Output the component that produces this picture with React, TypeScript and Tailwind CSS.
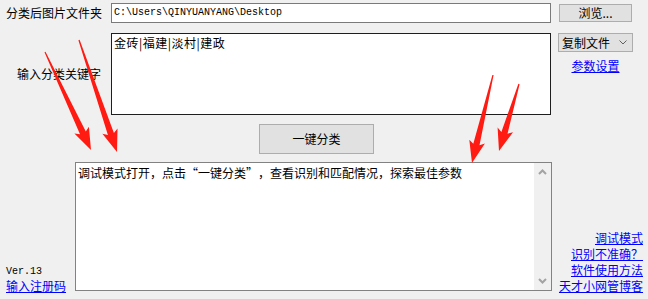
const cjk = "font-['Noto_Sans_CJK_SC',sans-serif]";
const mono = "font-['Liberation_Mono','Noto_Sans_CJK_SC',monospace]";

const arrows = [
  { x1: 45, y1: 52, x2: 91, y2: 150 },
  { x1: 79, y1: 40, x2: 117, y2: 152 },
  { x1: 493, y1: 75, x2: 472, y2: 163 },
  { x1: 519, y1: 84, x2: 499, y2: 151 },
];

function arrowPoints(a: { x1: number; y1: number; x2: number; y2: number }) {
  const dx = a.x2 - a.x1;
  const dy = a.y2 - a.y1;
  const len = Math.hypot(dx, dy);
  const ux = dx / len;
  const uy = dy / len;
  const nx = -uy;
  const ny = ux;
  const head = 19;
  const bx = a.x2 - ux * head;
  const by = a.y2 - uy * head;
  const p = (x: number, y: number) => `${x.toFixed(1)},${y.toFixed(1)}`;
  return [
    p(a.x1 + nx * 0.6, a.y1 + ny * 0.6),
    p(bx + nx * 3.2, by + ny * 3.2),
    p(bx + nx * 8 - ux * 3, by + ny * 8 - uy * 3),
    p(a.x2, a.y2),
    p(bx - nx * 8 - ux * 3, by - ny * 8 - uy * 3),
    p(bx - nx * 3.2, by - ny * 3.2),
    p(a.x1 - nx * 0.6, a.y1 - ny * 0.6),
  ].join(" ");
}

const links = ["调试模式", "识别不准确？", "软件使用方法", "天才小网管博客"];

export default function App() {
  return (
    <div className={`relative w-[648px] h-[299px] bg-[#f0f0f0] text-[12px] text-black overflow-hidden [text-spacing-trim:space-all] ${cjk}`}>
      {/* row 1 */}
      <div className="flex items-start pt-[3px]">
        <div className="w-[111px] pl-[6px] h-[20px] leading-[20px]">分类后图片文件夹</div>
        <div className={`w-[440px] h-[20px] border border-[#7a7a7a] bg-white pl-[2px] text-[10px] leading-[18px] ${mono}`}>
          C:\Users\QINYUANYANG\Desktop
        </div>
        <button className="ml-[8px] mt-[1px] w-[73px] h-[18px] border border-[#adadad] bg-[#e1e1e1] leading-[16px]">
          浏览...
        </button>
      </div>

      {/* row 2 */}
      <div className="flex items-start mt-[10px]">
        <div className="w-[111px] h-[82px] flex items-center justify-end pr-[10px]">输入分类关键字</div>
        <div className="w-[440px] h-[82px] border border-[#1e1e1e] bg-white pl-[2px] pt-[1px] leading-[16px] tracking-[0.5px]">
          金砖|福建|淡村|建政
        </div>
        <div className="ml-[7px] w-[75px] flex flex-col items-center">
          <div className="w-[75px] h-[19px] border border-[#adadad] bg-[#e1e1e1] flex items-center justify-between pl-[3px] pr-[5px] leading-[17px]">
            <span>复制文件</span>
            <svg width="8" height="5" viewBox="0 0 8 5">
              <path d="M0.5 0.5 L4 4 L7.5 0.5" fill="none" stroke="#606060" strokeWidth="1" />
            </svg>
          </div>
          <a className="mt-[6px] text-[#0000ff] underline leading-[15px]">参数设置</a>
        </div>
      </div>

      {/* row 3 */}
      <div className="flex mt-[9px] pl-[259px]">
        <button className="w-[115px] h-[30px] border border-[#adadad] bg-[#e1e1e1]">一键分类</button>
      </div>

      {/* row 4 */}
      <div className="flex items-start mt-[8px] h-[132px]">
        <div className="w-[75px] h-full flex flex-col justify-end pl-[6px]">
          <div className={`text-[10px] leading-[13px] ${mono}`}>Ver.13</div>
          <a className="text-[#0000ff] underline leading-[16px]">输入注册码</a>
        </div>
        <div className="w-[477px] h-[129px] border border-[#828282] bg-white flex">
          <div className="flex-1 pl-[2px] pt-[2px] leading-[16px]">
            调试模式打开，点击“一键分类”，查看识别和匹配情况，探索最佳参数
          </div>
          <div className="w-[17px] h-full bg-[#f0f0f0] flex flex-col items-center justify-between py-[6px]">
            <svg width="9" height="6" viewBox="0 0 9 6">
              <path d="M1 5 L4.5 1.5 L8 5" fill="none" stroke="#a3a3a3" strokeWidth="2" />
            </svg>
            <svg width="9" height="6" viewBox="0 0 9 6">
              <path d="M1 1 L4.5 4.5 L8 1" fill="none" stroke="#a3a3a3" strokeWidth="2" />
            </svg>
          </div>
        </div>
        <div className="flex-1 h-full flex flex-col justify-end items-end pr-[5px]">
          {links.map((t) => (
            <a key={t} className="text-[#0000ff] underline leading-[16px]">
              {t}
            </a>
          ))}
        </div>
      </div>

      {/* red annotation arrows */}
      <svg className="absolute left-0 top-0 pointer-events-none" width="648" height="299">
        {arrows.map((a, i) => (
          <polygon key={i} points={arrowPoints(a)} fill="#ff1a12" />
        ))}
      </svg>
    </div>
  );
}
